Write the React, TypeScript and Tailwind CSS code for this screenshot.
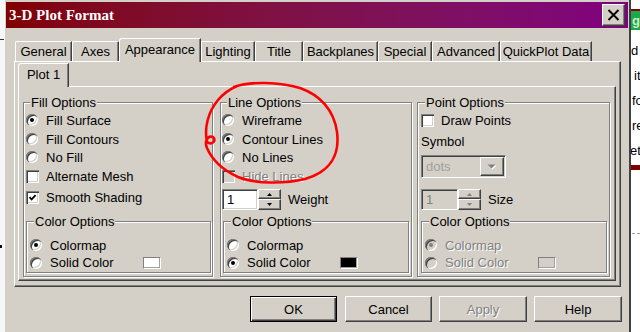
import React from "react";

const RAISED = "border border-[#404040] border-t-white border-l-white shadow-[inset_-1px_-1px_0_#808080]";
const SUNKEN = "border border-[#808080] border-r-white border-b-white shadow-[inset_1px_1px_0_#404040,inset_-1px_-1px_0_#d4d0c8]";
const INSET = "shadow-[inset_1px_1px_0_#808080,inset_2px_2px_0_#404040,inset_-1px_-1px_0_#fff,inset_-2px_-2px_0_#d4d0c8]";
const GREY = "text-[#808080] [text-shadow:1px_1px_0_#fff]";
const GROUP = "border border-[#808080] shadow-[inset_1px_1px_0_#fff,1px_1px_0_#fff]";
const LEGEND = "ml-[4px] px-[1px] leading-[15px] bg-[#d4d0c8]";

const tabs = [
  { label: "General", w: "w-[57px]" },
  { label: "Axes", w: "w-[47px]" },
  { label: "Appearance", w: "w-[82px]", active: true },
  { label: "Lighting", w: "w-[54px]" },
  { label: "Title", w: "w-[48px]" },
  { label: "Backplanes", w: "w-[75px]" },
  { label: "Special", w: "w-[54px]" },
  { label: "Advanced", w: "w-[68px]" },
  { label: "QuickPlot Data", w: "w-[92px]" },
];

function Tab({ label, w, active }: { label: string; w: string; active?: boolean }) {
  if (active) {
    return (
      <div
        className={`relative z-10 -mb-px flex h-[24px] ${w} items-center justify-center rounded-tl-[3px] border-l border-t border-r border-white border-r-[#404040] bg-[#d4d0c8] pb-[3px] shadow-[inset_-1px_0_0_#808080]`}
      >
        {label}
      </div>
    );
  }
  return (
    <div
      className={`flex h-[20px] ${w} items-center justify-center rounded-tl-[2px] border-l border-t border-r border-white border-r-[#404040] shadow-[inset_-1px_0_0_#808080]`}
    >
      {label}
    </div>
  );
}

function Radio({ checked, disabled }: { checked?: boolean; disabled?: boolean }) {
  return (
    <span
      className={`flex h-[12px] w-[12px] items-center justify-center rounded-full ${INSET} ${disabled ? "bg-[#d4d0c8]" : "bg-white"}`}
    >
      {checked && <span className={`h-[4px] w-[4px] rounded-full ${disabled ? "bg-[#808080]" : "bg-black"}`} />}
    </span>
  );
}

function Check({ checked, disabled }: { checked?: boolean; disabled?: boolean }) {
  return (
    <span className={`flex h-[13px] w-[13px] items-center justify-center ${INSET} ${disabled ? "bg-[#d4d0c8]" : "bg-white"}`}>
      {checked && (
        <svg width="9" height="9" viewBox="0 0 9 9" className="block">
          <path d="M1.5 4.2 L3.6 6.4 L7.6 2.2" fill="none" stroke="#000" strokeWidth="1.8" />
        </svg>
      )}
    </span>
  );
}

function Swatch({ color }: { color?: string }) {
  const fill = color === "black" ? "bg-black" : color === "white" ? "bg-white" : "bg-transparent";
  return <span className={`h-[12px] w-[18px] border border-[#808080] border-r-white border-b-white shadow-[inset_-1px_-1px_0_#a0a0a0] ${fill}`} />;
}

function Option({
  kind,
  label,
  checked,
  disabled,
  h,
  swatch,
}: {
  kind: "radio" | "check";
  label: string;
  checked?: boolean;
  disabled?: boolean;
  h: string;
  swatch?: string;
}) {
  return (
    <div className={`flex ${h} items-center`}>
      <span className="flex w-[20px] shrink-0">
        {kind === "radio" ? <Radio checked={checked} disabled={disabled} /> : <Check checked={checked} disabled={disabled} />}
      </span>
      <span className={`${swatch ? "w-[93px]" : ""} ${disabled ? GREY : ""}`}>{label}</span>
      {swatch && <Swatch color={swatch} />}
    </div>
  );
}

function Tri({ up, disabled }: { up?: boolean; disabled?: boolean }) {
  return (
    <svg width="5" height="3" viewBox="0 0 5 3" className="block">
      <polygon points={up ? "0,3 5,3 2.5,0" : "0,0 5,0 2.5,3"} fill={disabled ? "#808080" : "#000"} />
    </svg>
  );
}

function Spin({ disabled }: { disabled?: boolean }) {
  return (
    <div className="flex h-[21px] w-[23px] flex-col">
      <div className={`flex h-[10px] items-center justify-center ${RAISED}`}>
        <Tri up disabled={disabled} />
      </div>
      <div className={`flex h-[11px] items-center justify-center ${RAISED}`}>
        <Tri disabled={disabled} />
      </div>
    </div>
  );
}

export default function App() {
  return (
    <div className="relative flex h-[332px] w-[640px] overflow-hidden bg-white font-['Liberation_Sans',Arial,sans-serif] text-[13px] leading-[15px] text-black">
      {/* bit of the window behind, left */}
      <div className="flex w-[5px] shrink-0 flex-col bg-[#f7f7f7]">
        <div className="h-[39px]" />
        <div className="h-[1px] w-[4px] bg-[#333]" />
        <div className="h-[205px]" />
        <div className="h-[3px] w-[2px] bg-black" />
      </div>

      {/* dialog */}
      <div className="flex w-[626px] shrink-0 flex-col border-r-2 border-[#404040] bg-[#d4d0c8] pl-[1px] pr-[1px] pt-[2px]">
        <div className="flex h-[26px] shrink-0 items-center bg-linear-to-r from-[#800000] to-[#800080] pl-[3px] pr-[3px]">
          <span className="font-['Liberation_Serif',serif] text-[15px] font-bold text-white">3-D Plot Format</span>
          <div className={`ml-auto flex h-[22px] w-[23px] items-center justify-center bg-[#d4d0c8] ${RAISED}`}>
            <svg width="13" height="12" viewBox="0 0 13 12" className="block">
              <path d="M1.5 1 L11.5 11 M11.5 1 L1.5 11" stroke="#000" strokeWidth="1.9" fill="none" />
            </svg>
          </div>
        </div>

        <div className="flex flex-col pt-[10px]">
          <div className="ml-[9px] flex h-[23px] items-end">
            {tabs.map((t) => (
              <Tab key={t.label} label={t.label} w={t.w} active={t.active} />
            ))}
          </div>

          <div className={`ml-[8px] flex h-[226px] w-[607px] flex-col pl-[3px] pt-[1px] ${RAISED}`}>
            <div className="flex h-[23px] items-end">
              <Tab label="Plot 1" w="w-[51px]" active />
            </div>

            <div className={`flex h-[195px] w-[598px] pl-[4px] pt-[8px] ${RAISED}`}>
              {/* Fill Options */}
              <fieldset className={`${GROUP} h-[182px] w-[190px] shrink-0 pl-[2px]`}>
                <legend className={LEGEND}>Fill Options</legend>
                <Option kind="radio" label="Fill Surface" checked h="h-[20px]" />
                <Option kind="radio" label="Fill Contours" h="h-[18px]" />
                <Option kind="radio" label="No Fill" h="h-[18px]" />
                <Option kind="check" label="Alternate Mesh" h="h-[21px]" />
                <Option kind="check" label="Smooth Shading" checked h="h-[20px]" />
                <fieldset className={`${GROUP} mt-[7px] h-[59px] w-[185px] pl-[3px] pt-[7px]`}>
                  <legend className={LEGEND}>Color Options</legend>
                  <Option kind="radio" label="Colormap" checked h="h-[18px]" />
                  <Option kind="radio" label="Solid Color" h="h-[17px]" swatch="white" />
                </fieldset>
              </fieldset>

              {/* Line Options */}
              <fieldset className={`${GROUP} ml-[7px] h-[182px] w-[192px] shrink-0 pl-[1px]`}>
                <legend className={`${LEGEND} ml-[5px]`}>Line Options</legend>
                <Option kind="radio" label="Wireframe" h="h-[20px]" />
                <Option kind="radio" label="Contour Lines" checked h="h-[18px]" />
                <Option kind="radio" label="No Lines" h="h-[18px]" />
                <Option kind="check" label="Hide Lines" disabled h="h-[21px]" />
                <div className="flex h-[23px] items-start pt-[2px]">
                  <div className={`flex h-[21px] w-[36px] items-center bg-white pl-[4px] ${SUNKEN}`}>1</div>
                  <Spin />
                  <span className="ml-[7px] self-center pb-[1px]">Weight</span>
                </div>
                <fieldset className={`${GROUP} ml-[1px] mt-[4px] h-[59px] w-[186px] pl-[3px] pt-[7px]`}>
                  <legend className={LEGEND}>Color Options</legend>
                  <Option kind="radio" label="Colormap" h="h-[18px]" />
                  <Option kind="radio" label="Solid Color" checked h="h-[17px]" swatch="black" />
                </fieldset>
              </fieldset>

              {/* Point Options */}
              <fieldset className={`${GROUP} ml-[5px] h-[182px] w-[193px] shrink-0 pl-[3px]`}>
                <legend className={LEGEND}>Point Options</legend>
                <Option kind="check" label="Draw Points" h="h-[20px]" />
                <div className="flex h-[22px] items-center">Symbol</div>
                <div className={`mt-[3px] flex h-[23px] w-[85px] bg-[#d4d0c8] p-[1px] ${SUNKEN}`}>
                  <span className="flex flex-1 items-center pl-[3px] text-[#a0a0a0]">dots</span>
                  <span className={`flex w-[24px] items-center justify-center ${RAISED}`}>
                    <svg width="10" height="6" viewBox="0 0 10 6" className="block">
                      <polygon points="1.5,1.5 9.5,1.5 5.5,5.5" fill="#fff" />
                      <polygon points="0.5,0.5 8.5,0.5 4.5,4.5" fill="#808080" />
                    </svg>
                  </span>
                </div>
                <div className="mt-[11px] flex h-[21px] items-center">
                  <div className={`flex h-[21px] w-[37px] items-center bg-[#d4d0c8] pl-[4px] text-[#808080] ${SUNKEN}`}>1</div>
                  <Spin disabled />
                  <span className="ml-[7px] pb-[1px]">Size</span>
                </div>
                <fieldset className={`${GROUP} mt-[4px] h-[59px] w-[186px] pl-[3px] pt-[7px]`}>
                  <legend className={LEGEND}>Color Options</legend>
                  <Option kind="radio" label="Colormap" checked disabled h="h-[18px]" />
                  <Option kind="radio" label="Solid Color" disabled h="h-[17px]" swatch="none" />
                </fieldset>
              </fieldset>
            </div>
          </div>

          <div className="ml-[244px] mt-[9px] flex h-[26px]">
            <button className="w-[87px] border border-black shadow-[inset_1px_1px_0_#fff,inset_-1px_-1px_0_#404040,inset_-2px_-2px_0_#808080]">
              OK
            </button>
            <button className={`ml-[8px] w-[87px] ${RAISED}`}>Cancel</button>
            <button className={`ml-[7px] w-[88px] ${RAISED}`}>
              <span className={GREY}>Apply</span>
            </button>
            <button className={`ml-[7px] w-[88px] ${RAISED}`}>Help</button>
          </div>
        </div>
      </div>

      {/* bit of the window behind, right */}
      <div className="flex w-[9px] shrink-0 flex-col overflow-hidden whitespace-nowrap bg-white">
        <div className="h-[9px]" />
        <div className="h-[2px] bg-[#800000]" />
        <div className="h-[19px] bg-[#1fa84a] pl-[1px] font-bold leading-[19px] text-[#c8f0c8]">g</div>
        <div className="h-[8px]" />
        <div className="h-[25px] leading-[25px]">d</div>
        <div className="h-[25px] pl-[3px] leading-[25px]">it</div>
        <div className="h-[25px] pl-[1px] leading-[25px]">fo</div>
        <div className="h-[25px] pl-[1px] leading-[25px]">re</div>
        <div className="-ml-[1px] h-[25px] leading-[25px]">etu</div>
        <div className="mt-[2px] h-[5px] bg-[#800000]" />
        <div className="ml-[1px] mt-[63px] border-t border-dashed border-[#a0a0a0]" />
      </div>

      {/* red hand-drawn annotation */}
      <svg className="pointer-events-none absolute left-0 top-0" width="640" height="332" viewBox="0 0 640 332">
        <path
          d="M234 87 C250 81 280 82 300 88 C320 95 334 110 337 132 C340 155 330 172 305 179 C285 184 255 184 238 177 C225 171 213 162 207 148 C204 141 208 135 213 137 C217 140 212 146 207 142 C204 128 208 112 218 100 C224 93 230 89 237 86"
          fill="none"
          stroke="#ff0000"
          strokeWidth="2.6"
          strokeLinecap="round"
          strokeLinejoin="round"
        />
      </svg>
    </div>
  );
}
